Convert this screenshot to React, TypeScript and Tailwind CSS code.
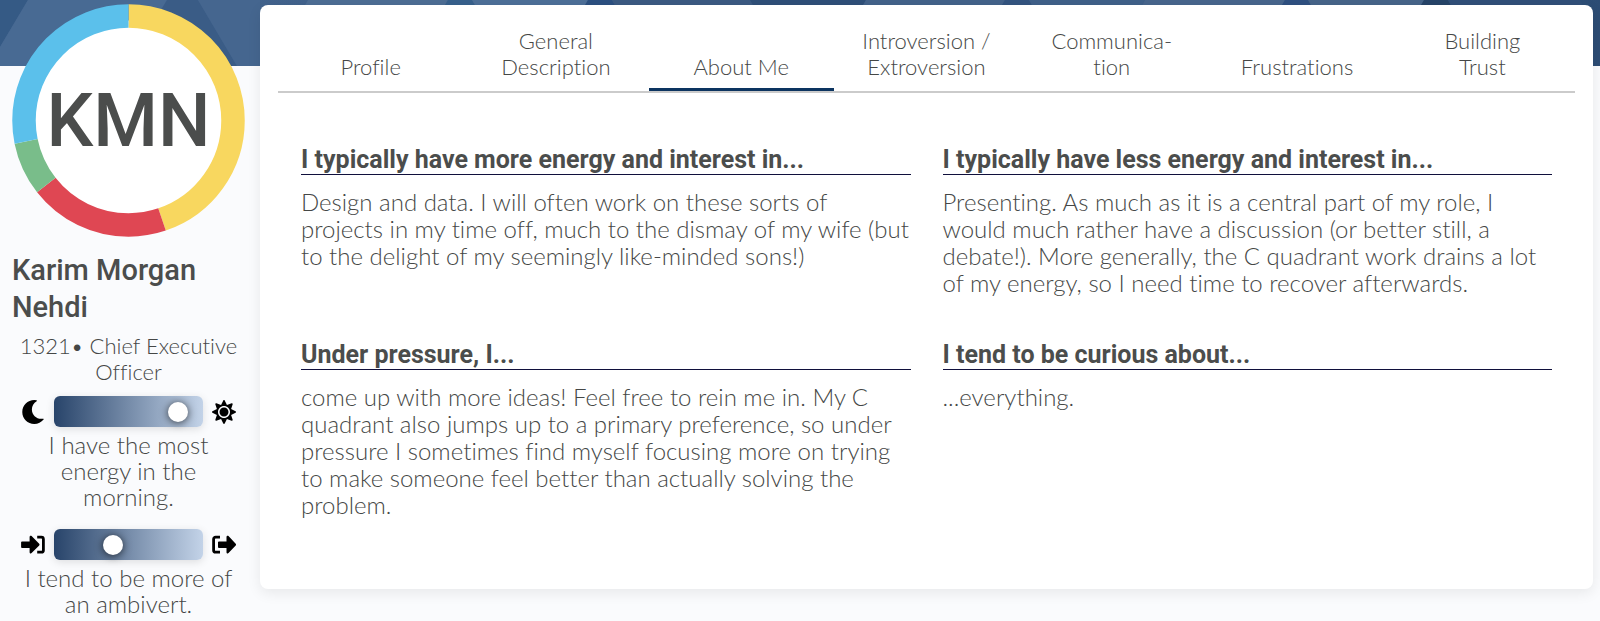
import { useState } from "react";
import type { ReactNode } from "react";
import { FaMoon, FaSun } from "react-icons/fa";

const TABS = [
  "Profile",
  "General\nDescription",
  "About Me",
  "Introversion /\nExtroversion",
  "Communica-\ntion",
  "Frustrations",
  "Building\nTrust",
];

const ANSWERS = [
  {
    title: "I typically have more energy and interest in...",
    body: "Design and data. I will often work on these sorts of projects in my time off, much to the dismay of my wife (but to the delight of my seemingly like-minded sons!)",
  },
  {
    title: "I typically have less energy and interest in...",
    body: "Presenting. As much as it is a central part of my role, I would much rather have a discussion (or better still, a debate!). More generally, the C quadrant work drains a lot of my energy, so I need time to recover afterwards.",
  },
  {
    title: "Under pressure, I...",
    body: "come up with more ideas! Feel free to rein me in. My C quadrant also jumps up to a primary preference, so under pressure I sometimes find myself focusing more on trying to make someone feel better than actually solving the problem.",
  },
  {
    title: "I tend to be curious about...",
    body: "...everything.",
  },
];

// share of the ring per quadrant, clockwise from the top
const QUADRANTS = [
  { color: "#f8d75f", value: 44.8 },
  { color: "#df4753", value: 19.6 },
  { color: "#79bd8a", value: 7.4 },
  { color: "#5bc0eb", value: 28.2 },
];

function Banner() {
  return (
    <svg
      className="absolute inset-x-0 top-0 h-[66px] w-full"
      viewBox="0 0 1600 66"
      preserveAspectRatio="none"
      aria-hidden="true"
    >
      <defs>
        <linearGradient id="banner" x1="0" x2="1" y1="0" y2="0">
          <stop offset="0" stopColor="#44658f" />
          <stop offset="0.4" stopColor="#3e5f89" />
          <stop offset="0.9" stopColor="#34567f" />
          <stop offset="1" stopColor="#2c4c74" />
        </linearGradient>
      </defs>
      <rect width="1600" height="66" fill="url(#banner)" />
      <path d="M0 0H28L0 47Z" fill="#355a85" />
      <path d="M28 0H167L128 66H0V47Z" fill="#486a93" />
      <path d="M167 0H198L237 66H128Z" fill="#3a5c86" />
      <path d="M198 0H260V66H237Z" fill="#45668f" />
      <path d="M308 0H448L440 14H300Z" fill="#4d6d94" />
      <path d="M448 0H472L480 14H440Z" fill="#37608c" />
      <path d="M472 0H588L580 14H480Z" fill="#4d6f98" />
      <path d="M588 0H612L620 14H580Z" fill="#2c5080" />
      <path d="M612 0H750L758 14H620Z" fill="#3b5a82" />
      <path d="M750 0H866L858 14H758Z" fill="#2f4f78" />
      <path d="M866 0H1005L997 14H858Z" fill="#43628a" />
      <path d="M1005 0H1029L1037 14H997Z" fill="#33547f" />
      <path d="M1029 0H1145L1137 14H1037Z" fill="#3f6089" />
      <path d="M1145 0H1285L1277 14H1137Z" fill="#47658c" />
      <path d="M1285 0H1308L1316 14H1277Z" fill="#2f5080" />
      <path d="M1308 0H1424L1416 14H1316Z" fill="#466489" />
      <path d="M1424 0H1448L1456 14H1416Z" fill="#264468" />
      <path d="M1448 0H1580L1588 14H1456Z" fill="#304f78" />
    </svg>
  );
}

function ProfileRing({ initials }: { initials: string }) {
  let offset = 0;
  return (
    <div className="grid size-[233px] place-items-center">
      <svg viewBox="0 0 233 233" className="col-start-1 row-start-1 size-full" aria-hidden="true">
        <circle cx="116.5" cy="116.5" r="100" fill="#fff" />
        {QUADRANTS.map((q) => {
          const start = offset;
          offset += q.value;
          return (
            <circle
              key={q.color}
              cx="116.5"
              cy="116.5"
              r="104.5"
              fill="none"
              stroke={q.color}
              strokeWidth="23.5"
              pathLength={100}
              strokeDasharray={`${q.value} ${100 - q.value}`}
              strokeDashoffset={-start}
              transform="rotate(-90 116.5 116.5)"
            />
          );
        })}
      </svg>
      <span className="col-start-1 row-start-1 font-[Roboto,sans-serif] text-[74px] leading-none font-medium text-[#4b4d4c]">
        {initials}
      </span>
    </div>
  );
}

function ArrowIn() {
  return (
    <svg viewBox="0 0 24 20" className="h-5 w-6" aria-hidden="true">
      <path d="M1 6.4h7.6V2c0-1.1 1.2-1.6 2-.9l7.6 7.7c.5.5.5 1.1 0 1.6l-7.6 7.7c-.8.8-2 .2-2-.9v-4.300H1c-.5 0-.9-.4-.9-.9V7.300c0-.5.4-.9.9-.9z" />
      <path d="M16.2 2.2h4.2c1.1 0 2 .9 2 2v11c0 1.1-.9 2-2 2h-4.2" fill="none" stroke="#000" strokeWidth="2.8" />
    </svg>
  );
}

function ArrowOut() {
  return (
    <svg viewBox="0 0 24 20" className="h-5 w-6" aria-hidden="true">
      <path d="M6.9 6.4h7.6V2c0-1.1 1.2-1.6 2-.9l7.2 7.7c.5.5.5 1.1 0 1.6l-7.2 7.7c-.8.8-2 .2-2-.9v-4.300H6.900c-.5 0-.9-.4-.9-.9V7.300c0-.5.4-.9.9-.9z" />
      <path d="M8 2.2H3.6c-1.1 0-2 .9-2 2v11c0 1.1.9 2 2 2H8" fill="none" stroke="#000" strokeWidth="2.8" />
    </svg>
  );
}

interface TraitProps {
  id: string;
  label: string;
  initial: number;
  left: ReactNode;
  right: ReactNode;
}

function Trait({ id, label, initial, left, right }: TraitProps) {
  const [value, setValue] = useState(initial);
  return (
    <div>
      <div className="flex items-center justify-center gap-[9px] text-black">
        {left}
        <input
          id={id}
          type="range"
          value={value}
          onChange={(e) => setValue(Number(e.target.value))}
          className="h-[31px] w-[149px] appearance-none rounded-md bg-linear-to-r/srgb from-[#28446a] to-[#c3d3e8] shadow-[0_2px_8px_rgba(0,0,0,0.12)] [&::-webkit-slider-thumb]:size-5 [&::-webkit-slider-thumb]:appearance-none [&::-webkit-slider-thumb]:rounded-full [&::-webkit-slider-thumb]:bg-white [&::-webkit-slider-thumb]:shadow-[0_1px_8px_rgba(0,0,0,0.7)]"
        />
        {right}
      </div>
      <label htmlFor={id} className="mt-[5px] block px-2 text-center text-2xl leading-[26px]">
        {label}
      </label>
    </div>
  );
}

export default function App() {
  const [active, setActive] = useState("About Me");

  return (
    <div className="relative min-h-screen bg-[#fafbfd] font-[Lato,sans-serif] font-light text-[#454746] [font-variant-ligatures:none]">
      <Banner />
      <div className="relative flex items-start gap-[15px] pr-[7px] pl-3">
        <aside className="w-[233px] shrink-0 pt-1">
          <ProfileRing initials="KMN" />
          <h1 className="mt-[15px] font-[Roboto,sans-serif] text-[29px] leading-[37px] font-medium text-[#4b4d4c]">
            Karim Morgan Nehdi
          </h1>
          <p className="mt-[7px] text-center text-[22px] leading-[26px]">1321• Chief Executive Officer</p>
          <div className="mt-[11px] flex flex-col gap-[19px]">
            <Trait
              id="energy"
              label="I have the most energy in the morning."
              initial={88}
              left={<FaMoon className="size-6" />}
              right={<FaSun className="size-6" />}
            />
            <Trait
              id="social"
              label="I tend to be more of an ambivert."
              initial={38}
              left={<ArrowIn />}
              right={<ArrowOut />}
            />
          </div>
        </aside>

        <main className="mt-[5px] flex-1 rounded-lg bg-white pt-[23px] pb-[71px] shadow-[0_4px_14px_rgba(0,0,0,0.08)]">
          <nav className="mx-[18px] grid grid-cols-7 border-b-2 border-[#cbcbcb]">
            {TABS.map((tab) => (
              <button
                key={tab}
                onClick={() => setActive(tab)}
                className={`flex items-end justify-center border-b-[3px] pb-2 text-[22px] leading-[26px] whitespace-pre-line ${
                  active === tab ? "border-[#0c3460]" : "border-transparent"
                }`}
              >
                {tab}
              </button>
            ))}
          </nav>
          <div className="mx-[41px] mt-[53px] grid grid-cols-2 gap-x-8 gap-y-[45px]">
            {ANSWERS.map((a) => (
              <section key={a.title}>
                <h2 className="border-b border-[#10103c] font-[Roboto,sans-serif] text-[25px] leading-[28px] font-bold text-[#4b4d4c]">
                  {a.title}
                </h2>
                <p className="mt-[13px] text-2xl leading-[27px]">{a.body}</p>
              </section>
            ))}
          </div>
        </main>
      </div>
    </div>
  );
}
